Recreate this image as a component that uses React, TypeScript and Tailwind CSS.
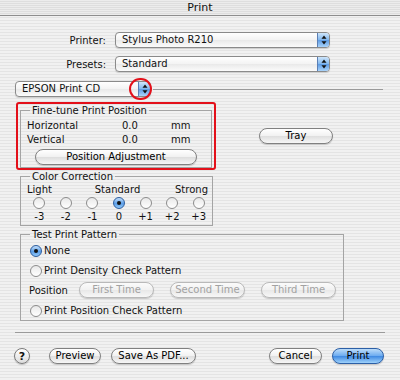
import React from 'react';

const STRIPES =
  'bg-[repeating-linear-gradient(180deg,#f1f1f1_0px,#f1f1f1_2px,#e4e4e4_2px,#e4e4e4_3px)]';

const Arrows: React.FC = () => (
  <svg width="6" height="10" viewBox="0 0 6 10">
    <path d="M3 0.5 L5.5 3.8 L0.5 3.8 Z" fill="#111" />
    <path d="M3 9.5 L5.5 6.2 L0.5 6.2 Z" fill="#111" />
  </svg>
);

const Popup: React.FC<{ label: string; className?: string }> = ({ label, className = '' }) => (
  <div
    className={`flex h-[16px] items-stretch rounded-[4px] border border-[#8a8a8a] bg-[linear-gradient(#ffffff,#f3f3f3_50%,#e9e9e9_51%,#fbfbfb)] shadow-[0_1px_1px_rgba(0,0,0,0.15)] ${className}`}
  >
    <span className="flex-1 pl-[6px] leading-[14px]">{label}</span>
    <span className="flex w-[12px] items-center justify-center rounded-r-[3px] border-l border-[#5b7fb5] bg-[linear-gradient(#cfe6fb,#7fb6ee_50%,#5c9be4_51%,#a9d3fa)]">
      <Arrows />
    </span>
  </div>
);

type BtnProps = { label: string; className?: string; disabled?: boolean; primary?: boolean };

const AquaButton: React.FC<BtnProps> = ({ label, className = '', disabled, primary }) => {
  const skin = primary
    ? 'border-[#2c5fa6] bg-[linear-gradient(#bcdcf9,#6aaaf0_50%,#3d88e2_51%,#9fd2fb)] text-black'
    : disabled
      ? 'border-[#b9b9b9] bg-[linear-gradient(#fbfbfb,#f1f1f1_50%,#e8e8e8_51%,#f7f7f7)] text-[#a2a2a2]'
      : 'border-[#808080] bg-[linear-gradient(#ffffff,#f1f1f1_50%,#dedede_51%,#f6f6f6)] text-black';
  return (
    <div
      className={`flex h-[16px] items-center justify-center rounded-full border leading-[14px] shadow-[0_1px_1px_rgba(0,0,0,0.18)] ${skin} ${className}`}
    >
      {label}
    </div>
  );
};

const Radio: React.FC<{ on?: boolean }> = ({ on }) => (
  <span
    className={`flex h-[12px] w-[12px] shrink-0 items-center justify-center rounded-full border ${
      on
        ? 'border-[#2d5d9e] bg-[linear-gradient(#c4e0fb,#5d9fe8_55%,#8ec6f8)]'
        : 'border-[#8c8c8c] bg-[linear-gradient(#e9e9e9,#ffffff)]'
    }`}
  >
    {on && <span className="h-[4px] w-[4px] rounded-full bg-[#111]" />}
  </span>
);

const Group: React.FC<{ title: string; className?: string; children: React.ReactNode }> = ({
  title,
  className = '',
  children,
}) => (
  <fieldset className={`border border-[#a4a4a4] ${className}`}>
    <legend className="ml-[9px] px-[2px] leading-[13px]">{title}</legend>
    {children}
  </fieldset>
);

const steps = ['-3', '-2', '-1', '0', '+1', '+2', '+3'];

export default function App() {
  return (
    <div
      className={`h-[380px] w-[400px] overflow-hidden text-[10px] text-[#111] ${STRIPES}`}
      style={{ fontFamily: '"DejaVu Sans", sans-serif' }}
    >
      {/* title bar */}
      <div className="flex h-[16px] items-center justify-center border-b border-[#8e8e8e] bg-[repeating-linear-gradient(180deg,#ececec_0px,#ececec_1px,#dedede_1px,#dedede_2px)] text-[11px] leading-[15px]">
        Print
      </div>

      <div className="mt-[16px] flex flex-col gap-[8px]">
        <div className="flex items-center">
          <span className="w-[106px] text-right">Printer:</span>
          <Popup label="Stylus Photo R210" className="ml-[9px] w-[215px]" />
        </div>
        <div className="flex items-center">
          <span className="w-[106px] text-right">Presets:</span>
          <Popup label="Standard" className="ml-[9px] w-[215px]" />
        </div>
      </div>

      <div className="mt-[9px] flex items-center pl-[15px] pr-[17px]">
        <div className="relative">
          <Popup label="EPSON Print CD" className="w-[136px]" />
          <span className="absolute left-[114px] top-[-3px] h-[22px] w-[23px] rounded-full border-2 border-[#e3101a]" />
        </div>
        <div className="ml-[2px] h-px flex-1 bg-[#9a9a9a]" />
      </div>

      <div className="ml-[16px] mt-[5px] flex items-start">
        <div className="h-[68px] w-[200px] rounded-[3px] border-2 border-[#e3101a] px-[2px]">
          <Group title="Fine-tune Print Position" className="h-[64px] w-[192px]">
            <div className="grid grid-cols-[95px_49px_auto] pl-[6px] pt-[2px] leading-[14px]">
              <span>Horizontal</span>
              <span>0.0</span>
              <span>mm</span>
              <span>Vertical</span>
              <span>0.0</span>
              <span>mm</span>
            </div>
            <AquaButton label="Position Adjustment" className="mx-auto mt-[2px] w-[162px]" />
          </Group>
        </div>
        <AquaButton label="Tray" className="ml-[43px] mt-[26px] w-[74px]" />
      </div>

      <Group title="Color Correction" className="ml-[20px] h-[56px] w-[192px]">
        <div className="mt-[1px] grid grid-cols-3 pl-[6px] pr-[4px] leading-[12px]">
          <span>Light</span>
          <span className="text-center">Standard</span>
          <span className="text-right">Strong</span>
        </div>
        <div className="ml-[5px] mt-[1px] grid w-[186px] grid-cols-7 justify-items-center">
          {steps.map((s) => (
            <Radio key={s} on={s === '0'} />
          ))}
        </div>
        <div className="ml-[5px] mt-[2px] grid w-[186px] grid-cols-7 justify-items-center leading-[12px]">
          {steps.map((s) => (
            <span key={s}>{s}</span>
          ))}
        </div>
      </Group>

      <Group title="Test Print Pattern" className="ml-[20px] mt-[2px] h-[93px] w-[324px]">
        <div className="flex flex-col pl-[9px]">
          <label className="mt-[3px] flex items-center gap-[2px] leading-[14px]">
            <Radio on />
            <span>None</span>
          </label>
          <label className="mt-[6px] flex items-center gap-[2px] leading-[14px]">
            <Radio />
            <span>Print Density Check Pattern</span>
          </label>
          <div className="mt-[4px] flex items-center">
            <span className="-ml-[1px] w-[50px]">Position</span>
            <AquaButton label="First Time" disabled className="w-[75px]" />
            <AquaButton label="Second Time" disabled className="ml-[16px] w-[75px]" />
            <AquaButton label="Third Time" disabled className="ml-[16px] w-[75px]" />
          </div>
          <label className="mt-[6px] flex items-center gap-[2px] leading-[14px]">
            <Radio />
            <span>Print Position Check Pattern</span>
          </label>
        </div>
      </Group>

      <div className="mx-[15px] mt-[11px] h-px bg-[#9a9a9a]" />

      <div className="mt-[15px] flex items-center pl-[14px] pr-[16px]">
        <span className="flex h-[16px] w-[16px] items-center justify-center rounded-full border border-[#7a7a7a] bg-[linear-gradient(#ffffff,#dcdcdc)] text-[11px] font-bold leading-none shadow-[0_1px_1px_rgba(0,0,0,0.2)]">
          ?
        </span>
        <AquaButton label="Preview" className="ml-[19px] w-[52px]" />
        <AquaButton label="Save As PDF..." className="ml-[10px] w-[85px]" />
        <div className="flex-1" />
        <AquaButton label="Cancel" className="w-[53px]" />
        <AquaButton label="Print" primary className="ml-[10px] w-[52px]" />
      </div>
    </div>
  );
}
